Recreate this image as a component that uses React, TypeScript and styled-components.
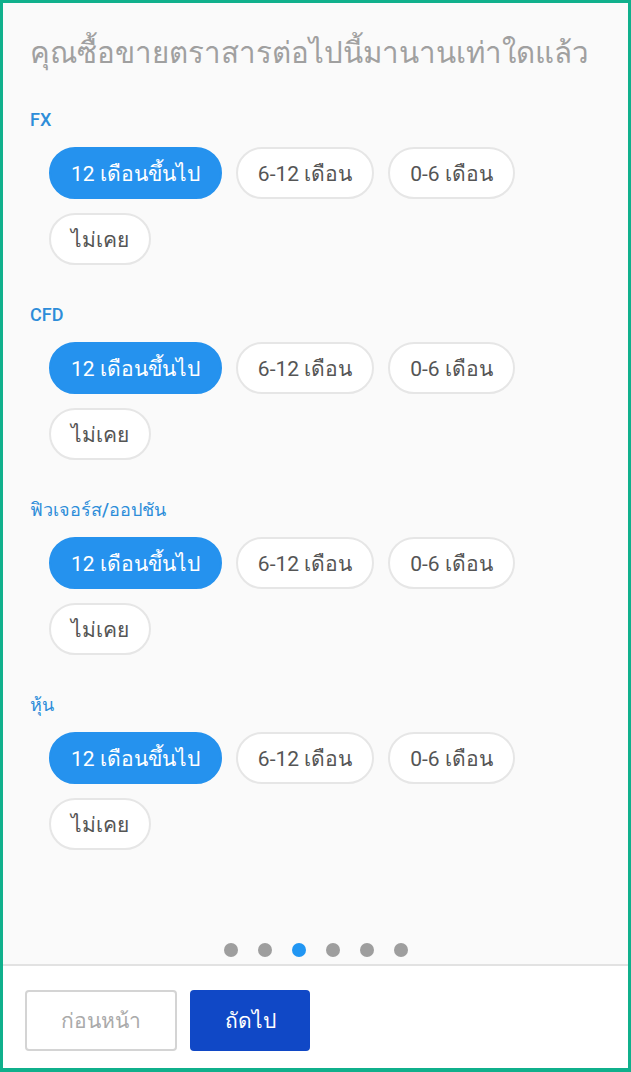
import React, { useState } from 'react';
import styled, { createGlobalStyle } from 'styled-components';

const GlobalStyle = createGlobalStyle`
  html, body {
    margin: 0;
    padding: 0;
    background: #ffffff;
  }
  * {
    box-sizing: border-box;
  }
  body {
    font-family: Roboto, "Noto Sans", "DejaVu Sans", sans-serif;
  }
`;

const OPTIONS = ['12 เดือนขึ้นไป', '6-12 เดือน', '0-6 เดือน', 'ไม่เคย'];

const SECTIONS = ['FX', 'CFD', 'ฟิวเจอร์ส/ออปชัน', 'หุ้น'];

const STEPS = 6;

const App: React.FC = () => {
  const [answers, setAnswers] = useState<string[]>(SECTIONS.map(() => OPTIONS[0]));

  const pick = (index: number, value: string) => {
    setAnswers((prev) => prev.map((a, i) => (i === index ? value : a)));
  };

  return (
    <>
      <GlobalStyle />
      <Frame>
        <Body>
          <Title>คุณซื้อขายตราสารต่อไปนี้มานานเท่าใดแล้ว</Title>
          {SECTIONS.map((section, i) => (
            <Section key={section}>
              <SectionLabel>{section}</SectionLabel>
              <PillList>
                {OPTIONS.map((option) => (
                  <Pill
                    key={option}
                    $active={answers[i] === option}
                    onClick={() => pick(i, option)}
                  >
                    {option}
                  </Pill>
                ))}
              </PillList>
            </Section>
          ))}
          <Dots>
            {Array.from({ length: STEPS }).map((_, i) => (
              <Dot key={i} $active={i === 2} />
            ))}
          </Dots>
        </Body>
        <Footer>
          <PrevButton>ก่อนหน้า</PrevButton>
          <NextButton>ถัดไป</NextButton>
        </Footer>
      </Frame>
    </>
  );
};

const Frame = styled.div`
  width: 631px;
  height: 1072px;
  display: flex;
  flex-direction: column;
  border: 3px solid #10b08c;
  border-bottom-width: 4px;
  background: #ffffff;
`;

const Body = styled.div`
  flex: 1;
  display: flex;
  flex-direction: column;
  padding: 30px 27px 0;
  background: #fafafa;
  border-bottom: 2px solid #e2e2e2;
`;

const Title = styled.h1`
  margin: 0 0 36px;
  font-size: 29.5px;
  line-height: 40px;
  font-weight: 400;
  color: #a0a0a0;
  white-space: nowrap;
`;

const Section = styled.section`
  margin-bottom: 39px;
`;

const SectionLabel = styled.div`
  font-size: 18px;
  line-height: 22px;
  font-weight: 500;
  color: #2d8dd9;
  margin-bottom: 16px;
`;

const PillList = styled.div`
  display: flex;
  flex-wrap: wrap;
  gap: 14px;
  padding-left: 19px;
  width: 540px;
`;

const Pill = styled.button<{ $active: boolean }>`
  height: 52px;
  padding: 0 20px;
  border-radius: 26px;
  font-family: inherit;
  font-size: 21px;
  cursor: pointer;
  border: 2px solid ${(p) => (p.$active ? '#2592ee' : '#e6e6e6')};
  background: ${(p) => (p.$active ? '#2592ee' : '#ffffff')};
  color: ${(p) => (p.$active ? '#ffffff' : '#555555')};
`;

const Dots = styled.div`
  margin-top: auto;
  display: flex;
  justify-content: center;
  gap: 20px;
  padding-bottom: 7px;
`;

const Dot = styled.span<{ $active: boolean }>`
  width: 14px;
  height: 14px;
  border-radius: 50%;
  background: ${(p) => (p.$active ? '#2196f3' : '#9e9e9e')};
`;

const Footer = styled.div`
  display: flex;
  gap: 13px;
  padding: 24px 22px 17px;
  background: #ffffff;
`;

const BaseButton = styled.button`
  height: 61px;
  border-radius: 4px;
  font-family: inherit;
  font-size: 21px;
  cursor: pointer;
`;

const PrevButton = styled(BaseButton)`
  width: 152px;
  background: #ffffff;
  border: 2px solid #d4d4d4;
  color: #aaaaaa;
`;

const NextButton = styled(BaseButton)`
  width: 120px;
  background: #1048c6;
  border: none;
  color: #ffffff;
`;

export default App;
